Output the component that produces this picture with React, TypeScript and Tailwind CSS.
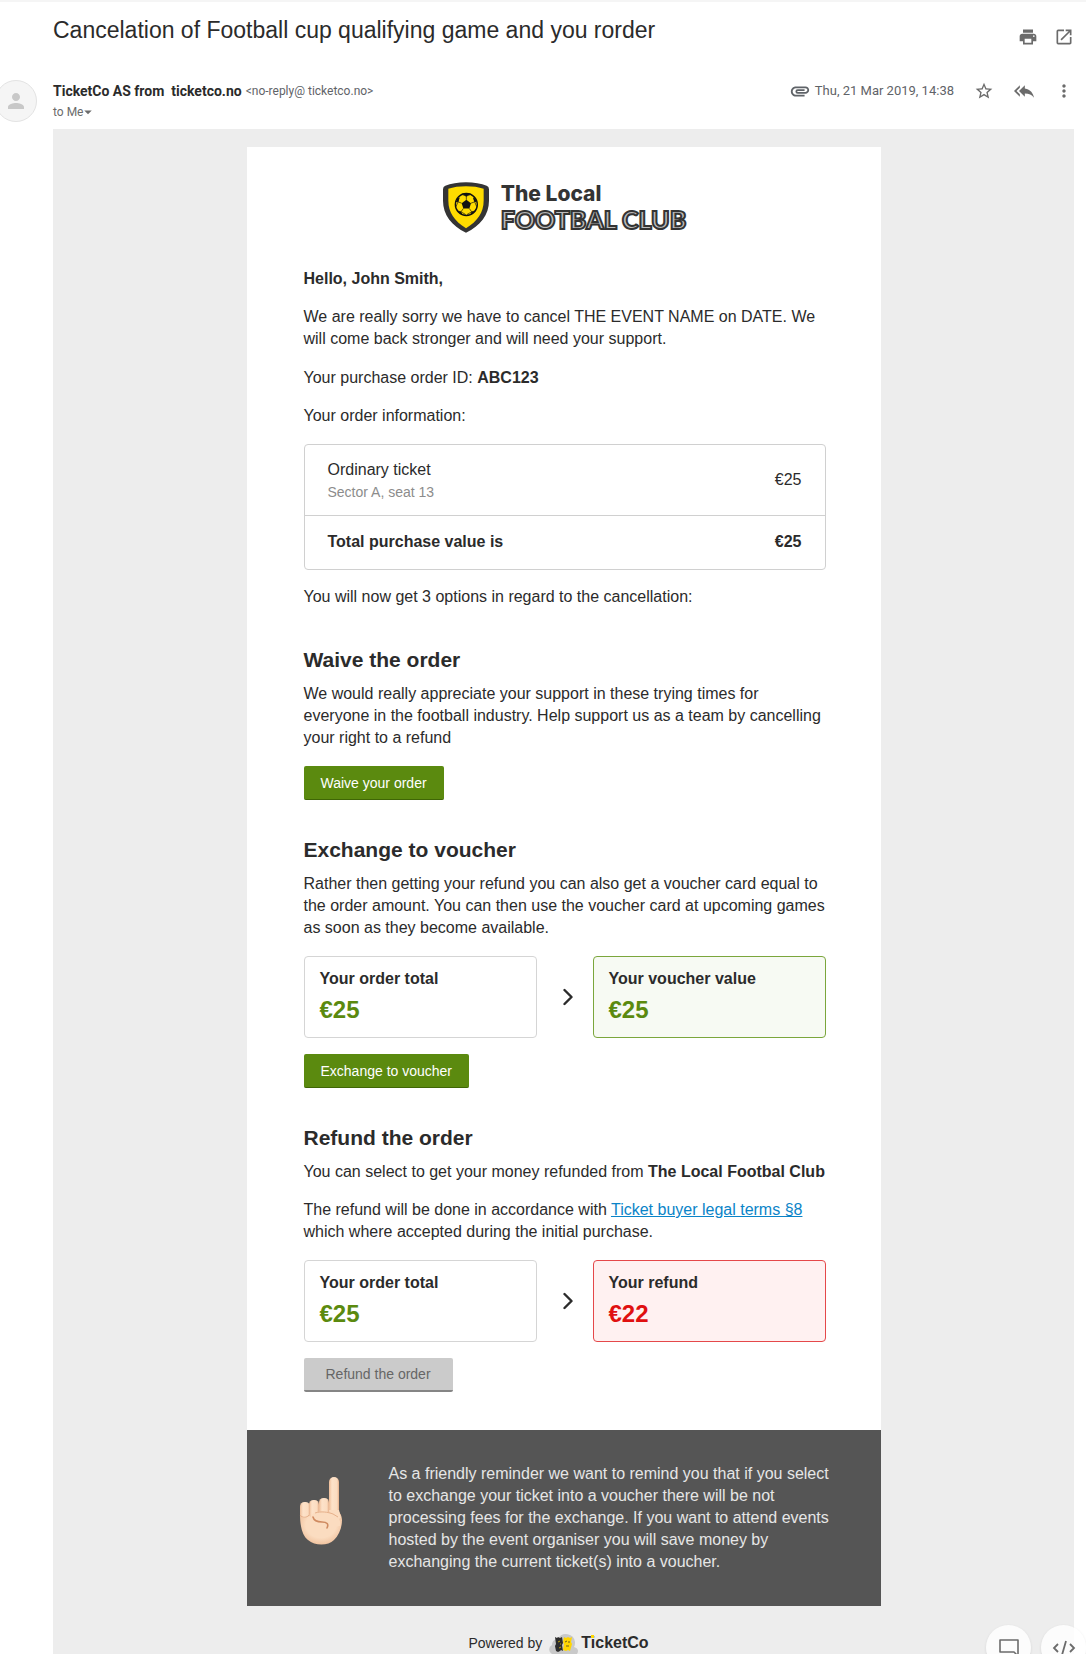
import type { ReactNode } from "react"
import {
  MdArrowDropDown,
  MdAttachment,
  MdMoreVert,
  MdOpenInNew,
  MdPerson,
  MdPrint,
  MdReplyAll,
  MdStarBorder,
} from "react-icons/md"

const tones = {
  neutral: { box: "border-[#d5d5d5] bg-white", value: "text-[#5b8a0f]" },
  green: { box: "border-[#7ba63c] bg-[#f7faf3]", value: "text-[#5b8a0f]" },
  red: { box: "border-[#e5484a] bg-[#fff1f1]", value: "text-[#e01010]" },
}

type Tone = keyof typeof tones

function IconButton({ label, children }: { label: string; children: ReactNode }) {
  return (
    <button type="button" aria-label={label} className="text-[#6b6b6b]">
      {children}
    </button>
  )
}

function ClubLogo() {
  return (
    <div className="flex justify-center gap-3">
      <svg viewBox="0 0 138 152" className="h-[51px] w-[46px]" aria-hidden="true">
        <path
          d="M69 0C93 0 115 4 131 11q7 3 7 10v35c0 42-26 75-69 96C26 131 0 98 0 56V21q0-7 7-10C23 4 45 0 69 0Z"
          fill="#343434"
        />
        <path
          d="M69 12c20 0 38 2 53 8v36c0 35-19 62-53 82C35 118 16 91 16 56V20c15-6 33-8 53-8Z"
          fill="#ffdc00"
        />
        <circle cx="70" cy="67" r="33" fill="#ffdc00" stroke="#111" strokeWidth="4" />
        <path d="m70 53 14 10-5 16H61l-5-16Z" fill="#111" />
        <path
          d="M70 53V42M84 63l11-4M79 79l7 10M61 79l-7 10M56 63l-11-4M45 59l-6 14M95 59l6 14M70 42l-13-5M70 42l13-5M54 89l14 8M86 89l-14 8M54 89l-12-3M86 89l12-3M45 59l3-12M95 59l-3-12"
          stroke="#111"
          strokeWidth="2"
          fill="none"
        />
        <path
          d="m57 34 13 9 13-9ZM38 60l8-1 4-14-7 5ZM102 60l-8-1-4-14 7 5ZM42 86l12 3 6 10-10-5ZM98 86l-12 3-6 10 10-5Z"
          fill="#111"
        />
      </svg>
      <div className="text-[#343434]">
        <div className="font-['Inter',sans-serif] text-[21px] leading-6 font-extrabold">
          The Local
        </div>
        <div className="font-['Lato',sans-serif] text-[25px] leading-[26px] font-black text-[#bdbdbd] [-webkit-text-stroke:2px_#343434]">
          FOOTBAL CLUB
        </div>
      </div>
    </div>
  )
}

function ActionButton({ children }: { children: ReactNode }) {
  return (
    <button
      type="button"
      className="block h-[34px] rounded-xs border-b border-[#3f6605] bg-[#5b8a0f] px-[17px] text-sm text-white"
    >
      {children}
    </button>
  )
}

function ValueBox({ label, value, tone }: { label: string; value: string; tone: Tone }) {
  return (
    <div className={`flex-1 rounded border px-[15px] py-[11px] ${tones[tone].box}`}>
      <div className="font-bold">{label}</div>
      <div className={`mt-1 text-2xl leading-8 font-bold ${tones[tone].value}`}>{value}</div>
    </div>
  )
}

function Comparison({ label, value, tone }: { label: string; value: string; tone: Tone }) {
  return (
    <div className="mt-[17px] mb-4 flex items-center">
      <ValueBox label="Your order total" value="€25" tone="neutral" />
      <div className="flex w-14 justify-center pl-[6px]">
        <svg viewBox="0 0 10 18" className="h-[18px] w-[10px]" aria-hidden="true">
          <path
            d="m1.5 2 7 7-7 7"
            fill="none"
            stroke="#2b2b2b"
            strokeWidth="2.4"
            strokeLinecap="round"
            strokeLinejoin="round"
          />
        </svg>
      </div>
      <ValueBox label={label} value={value} tone={tone} />
    </div>
  )
}

function SectionTitle({ children }: { children: ReactNode }) {
  return <h2 className="mb-[9px] text-[21px] leading-7 font-bold">{children}</h2>
}

function PointingHand() {
  return (
    <svg viewBox="0 0 46 70" className="h-[70px] w-[46px] shrink-0" aria-hidden="true">
      <defs>
        <radialGradient id="palm" cx="0.5" cy="0.45" r="0.6">
          <stop offset="0.6" stopColor="#fbdcc0" />
          <stop offset="1" stopColor="#eebd98" />
        </radialGradient>
        <linearGradient id="finger" x1="0" x2="1" y1="0" y2="0">
          <stop offset="0" stopColor="#eebd98" />
          <stop offset="0.3" stopColor="#fde2c9" />
          <stop offset="0.8" stopColor="#fbdcc0" />
          <stop offset="1" stopColor="#e6b08a" />
        </linearGradient>
      </defs>
      <path
        d="M1 38c0 14 3 22 8 26 7 6 20 6 26 0 5-5 8-12 8-20 0-5-3-9-6-11H9c-5 0-8 2-8 5Z"
        fill="url(#palm)"
      />
      <rect x="30" y="1" width="10" height="44" rx="5" fill="url(#finger)" />
      <path d="M30 34h10l2 8-10 4Z" fill="#fbdcc0" />
      <rect x="20" y="22" width="10" height="19" rx="4.5" fill="url(#finger)" />
      <rect x="10" y="24" width="10" height="18" rx="4.5" fill="url(#finger)" />
      <rect x="1" y="26" width="10" height="16" rx="4.5" fill="url(#finger)" />
      <path
        d="M16 37c5-2 12-2 18 1 6 3 8 7 7 12l-13 2c2-5-2-7-6-6-5 0-9-3-9-6 0-2 1-3 3-3Z"
        fill="#fbdcc0"
      />
      <path d="M1 39c2 3 7 3 9 0M16 37c6-2 13-1 18 1l5 3" fill="none" stroke="#e6b08a" />
      <path
        d="M14 41c1 4 5 5 9 5 5 0 7 2 5 6"
        fill="none"
        stroke="#cf8a60"
        strokeWidth="1.6"
        strokeLinecap="round"
      />
    </svg>
  )
}

function TicketCoLogo() {
  return (
    <div className="flex items-center gap-[3px]">
      <svg viewBox="0 0 30 22" className="h-[22px] w-[30px]" aria-hidden="true">
        <path
          d="M4 22a5 5 0 0 1 0-9c0-4 3-6 6-6a9 9 0 0 1 17 3c0 2 0 3-1 5 4 1 5 4 3 7Z"
          fill="#c9c9c9"
        />
        <path
          d="m7 5 2 1 1-1 2 1 2-1 1 6-1 2 1 6-2-1-1 1-2 1-2-1-1-5 1-2Z"
          fill="#2c2c2c"
        />
        <path d="m16 5 2 1 2-1 2 1 2-1-1 5 1 2-2 7-2-1-2 1-3-1 1-6-1-2Z" fill="#ffd600" />
        <path d="m10 10 2-1m0 3 1 0m-2 4 2-1" stroke="#ffd600" strokeWidth="0.7" fill="none" />
        <path d="m17 10 2-1m1 1 2 0m-4 4 3 0" stroke="#2c2c2c" strokeWidth="0.7" fill="none" />
      </svg>
      <span className="relative text-base leading-[22px] font-bold">
        TicketCo
        <span className="absolute top-[3px] left-[10px] h-[3px] w-[3px] bg-[#ffd600]" />
      </span>
    </div>
  )
}

function MailHeader() {
  return (
    <header className="border-t-2 border-[#f5f5f5] pr-3">
      <div className="flex items-start justify-between pt-3 pl-[53px]">
        <h1 className="text-[23px] leading-8">
          Cancelation of Football cup qualifying game and you rorder
        </h1>
        <div className="flex gap-4 pt-[13px]">
          <IconButton label="Print">
            <MdPrint size={20} />
          </IconButton>
          <IconButton label="Open in new window">
            <MdOpenInNew size={20} />
          </IconButton>
        </div>
      </div>

      <div className="mt-[33px] mb-[7px] flex items-start font-['Roboto',sans-serif]">
        <div className="-ml-[5px] flex size-[42px] items-center justify-center rounded-full border border-[#e3e3e3] bg-[#f5f5f5]">
          <MdPerson size={24} className="text-[#c8c8c8]" />
        </div>
        <div className="ml-4 flex-1">
          <div className="flex items-center gap-1">
            <span className="text-sm leading-[23px] font-bold whitespace-pre">
              TicketCo AS from  ticketco.no
            </span>
            <span className="text-xs leading-[23px] text-[#5f6368]">
              &lt;no-reply@ ticketco.no&gt;
            </span>
          </div>
          <button
            type="button"
            className="flex items-center text-xs leading-[18px] text-[#6b6b6b]"
          >
            to Me
            <MdArrowDropDown size={18} className="-ml-1" />
          </button>
        </div>
        <div className="flex h-[22px] items-center gap-5">
          <div className="flex items-center gap-1 text-[13px] text-[#5f6368]">
            <MdAttachment size={22} />
            Thu, 21 Mar 2019, 14:38
          </div>
          <IconButton label="Star">
            <MdStarBorder size={20} />
          </IconButton>
          <IconButton label="Reply all">
            <MdReplyAll size={20} />
          </IconButton>
          <IconButton label="More">
            <MdMoreVert size={20} />
          </IconButton>
        </div>
      </div>
    </header>
  )
}

function OrderTable() {
  return (
    <div className="mt-[17px] rounded border border-[#d0d0d0]">
      <table className="w-full">
        <tbody>
          <tr className="border-b border-[#d0d0d0]">
            <td className="pt-[14px] pb-3 pl-[23px]">
              <div>Ordinary ticket</div>
              <div className="text-sm leading-[22px] text-[#8c8c8c]">Sector A, seat 13</div>
            </td>
            <td className="pr-[23px] text-right">€25</td>
          </tr>
          <tr className="font-bold">
            <td className="pt-[15px] pb-4 pl-[23px]">Total purchase value is</td>
            <td className="pt-[15px] pr-[23px] pb-4 text-right">€25</td>
          </tr>
        </tbody>
      </table>
    </div>
  )
}

export default function App() {
  return (
    <div className="flex min-h-screen flex-col bg-white font-['Liberation_Sans',Arial,sans-serif] text-[#2b2b2b]">
      <MailHeader />

      <main className="mr-3 ml-[53px] flex-1 bg-[#ededed] pt-[18px] text-base leading-[22px]">
        <div className="mx-auto max-w-[634px]">
          <article className="bg-white pt-[35px] pr-[55px] pb-[38px] pl-[57px]">
            <ClubLogo />

            <p className="mt-[35px] font-bold">Hello, John Smith,</p>
            <p className="mt-4">
              We are really sorry we have to cancel THE EVENT NAME on DATE. We will come back
              stronger and will need your support.
            </p>
            <p className="mt-[17px]">
              Your purchase order ID: <strong>ABC123</strong>
            </p>
            <p className="mt-4">Your order information:</p>
            <OrderTable />
            <p className="mt-4">You will now get 3 options in regard to the cancellation:</p>

            <section className="mt-[38px]">
              <SectionTitle>Waive the order</SectionTitle>
              <p className="mb-[17px]">
                We would really appreciate your support in these trying times for everyone in the
                football industry. Help support us as a team by cancelling your right to a refund
              </p>
              <ActionButton>Waive your order</ActionButton>
            </section>

            <section className="mt-9">
              <SectionTitle>Exchange to voucher</SectionTitle>
              <p>
                Rather then getting your refund you can also get a voucher card equal to the order
                amount. You can then use the voucher card at upcoming games as soon as they become
                available.
              </p>
              <Comparison label="Your voucher value" value="€25" tone="green" />
              <ActionButton>Exchange to voucher</ActionButton>
            </section>

            <section className="mt-9">
              <SectionTitle>Refund the order</SectionTitle>
              <p>
                You can select to get your money refunded from{" "}
                <strong>The Local Footbal Club</strong>
              </p>
              <p className="mt-4">
                The refund will be done in accordance with{" "}
                <a href="#terms" className="text-[#0a84c8] underline">
                  Ticket buyer legal terms §8
                </a>{" "}
                which where accepted during the initial purchase.
              </p>
              <Comparison label="Your refund" value="€22" tone="red" />
              <button
                type="button"
                className="block h-[34px] rounded-xs border-b-2 border-[#858585] bg-[#cbcbcb] px-[22px] text-sm text-[#666]"
              >
                Refund the order
              </button>
            </section>
          </article>

          <aside className="flex items-start gap-11 bg-[#555] py-[33px] pr-[46px] pl-[52px] text-[#e6e6e6]">
            <div className="pt-[13px]">
              <PointingHand />
            </div>
            <p>
              As a friendly reminder we want to remind you that if you select to exchange your
              ticket into a voucher there will be not processing fees for the exchange. If you want
              to attend events hosted by the event organiser you will save money by exchanging the
              current ticket(s) into a voucher.
            </p>
          </aside>

          <footer className="mt-[26px] flex items-center justify-center gap-[6px] pr-[10px] text-sm leading-[22px]">
            Powered by
            <TicketCoLogo />
          </footer>
        </div>
      </main>

      {/* Floating tools, half tucked under the window edge */}
      <div className="fixed right-0 -bottom-4 flex gap-[10px] text-[#6b6b6b]">
        <button
          type="button"
          aria-label="Comments"
          className="flex size-[45px] items-center justify-center rounded-full bg-white/80 shadow"
        >
          <svg viewBox="0 0 20 18" className="h-[18px] w-5" aria-hidden="true">
            <path
              d="M1 1h18v16l-4-4H1Z"
              fill="none"
              stroke="currentColor"
              strokeWidth="1.6"
              strokeLinejoin="round"
            />
          </svg>
        </button>
        <button
          type="button"
          aria-label="Code"
          className="flex size-[45px] items-center justify-center rounded-full bg-white/80 shadow"
        >
          <svg viewBox="0 0 24 16" className="h-4 w-6" aria-hidden="true">
            <path
              d="M6 4 2 8l4 4M18 4l4 4-4 4M14 1l-4 14"
              fill="none"
              stroke="currentColor"
              strokeWidth="1.8"
            />
          </svg>
        </button>
      </div>
    </div>
  )
}
